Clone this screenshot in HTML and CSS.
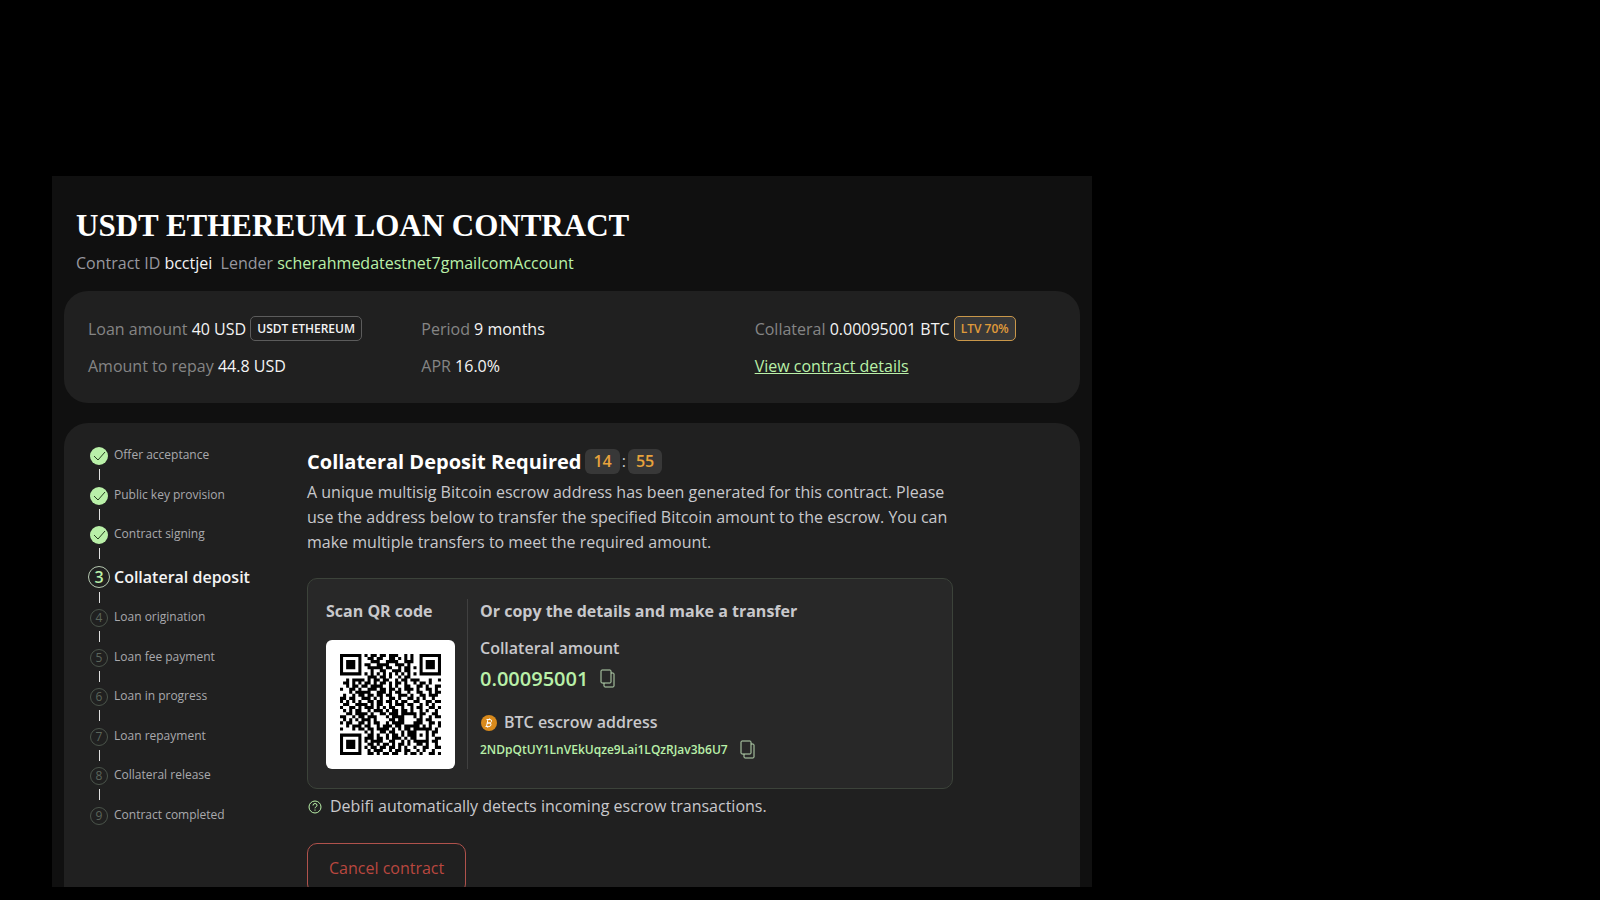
FILE: index.html
```html
<!DOCTYPE html>
<html lang="en">
  <head>
    <meta charset="UTF-8" />
    <meta name="viewport" content="width=device-width, initial-scale=1.0" />
    <title>Loan contract</title>
    <link rel="stylesheet" href="styles.css">
  </head>
  <body>
    <main class="frame">
      <header class="page-head">
        <h1>USDT ETHEREUM LOAN CONTRACT</h1>
        <p>
          Contract ID <span class="white">bcctjei</span>&nbsp; Lender
          <span class="green">scherahmedatestnet7gmailcomAccount</span>
        </p>
      </header>

      <section class="card summary">
        <p>Loan amount <span class="white">40 USD</span> <span class="tag">USDT ETHEREUM</span></p>
        <p>Period <span class="white">9 months</span></p>
        <p>Collateral <span class="white">0.00095001 BTC</span> <span class="tag tag-ltv">LTV 70%</span></p>
        <p>Amount to repay <span class="white">44.8 USD</span></p>
        <p>APR <span class="white">16.0%</span></p>
        <p><a href="#" class="green">View contract details</a></p>
      </section>

      <section class="card contract">
        <ol class="steps">
          <li class="done"><span class="mark"><svg viewBox="0 0 18 18"><path d="M4 9l4 4 7-8" /></svg></span>Offer acceptance</li>
          <li class="done"><span class="mark"><svg viewBox="0 0 18 18"><path d="M4 9l4 4 7-8" /></svg></span>Public key provision</li>
          <li class="done"><span class="mark"><svg viewBox="0 0 18 18"><path d="M4 9l4 4 7-8" /></svg></span>Contract signing</li>
          <li class="active"><span class="mark">3</span>Collateral deposit</li>
          <li><span class="mark">4</span>Loan origination</li>
          <li><span class="mark">5</span>Loan fee payment</li>
          <li><span class="mark">6</span>Loan in progress</li>
          <li><span class="mark">7</span>Loan repayment</li>
          <li><span class="mark">8</span>Collateral release</li>
          <li><span class="mark">9</span>Contract completed</li>
        </ol>

        <div class="deposit">
          <div class="deposit-head">
            <h2>Collateral Deposit Required</h2>
            <div class="timer"><span>14</span>:<span>55</span></div>
          </div>
          <p class="intro">
            A unique multisig Bitcoin escrow address has been generated for this contract. Please
            use the address below to transfer the specified Bitcoin amount to the escrow. You can
            make multiple transfers to meet the required amount.
          </p>

          <div class="transfer">
            <div class="scan">
              <h3>Scan QR code</h3>
              <div class="qr"><svg class="qr-code" viewBox="0 0 33 33"><path /></svg></div>
            </div>
            <div class="details">
              <h3>Or copy the details and make a transfer</h3>
              <h4>Collateral amount</h4>
              <div class="copy-row amount">
                <span>0.00095001</span>
                <button class="copy" aria-label="Copy amount">
                  <svg viewBox="0 0 15 19"><rect x="1" y="1" width="10" height="13" rx="1" /><path d="M11 4h2q1 0 1 1v12q0 1-1 1H5q-1 0-1-1v-3" /></svg>
                </button>
              </div>
              <h4 class="btc">
                <svg viewBox="0 0 18 18">
                  <circle cx="9" cy="9" r="8" />
                  <path d="M8 5L6.500 12.500M6.500 5.500h3.500q2 .2 1.500 2t-2.500 1.500h-2h2.300q2.200.2 1.700 2t-2.500 1.500H5.500M9.500 4.500v1M8 12.500l-.3 1.200" />
                </svg>
                BTC escrow address
              </h4>
              <div class="copy-row address">
                <span>2NDpQtUY1LnVEkUqze9Lai1LQzRJav3b6U7</span>
                <button class="copy" aria-label="Copy address">
                  <svg viewBox="0 0 15 19"><rect x="1" y="1" width="10" height="13" rx="1" /><path d="M11 4h2q1 0 1 1v12q0 1-1 1H5q-1 0-1-1v-3" /></svg>
                </button>
              </div>
            </div>
          </div>

          <p class="note">
            <svg viewBox="0 0 14 14"><circle cx="7" cy="7" r="6" /><path d="M5 5.500q0-2 2-2t2 1.800q0 1-1 1.500t-1 1.500M7 9.500v1.200" /></svg>
            Debifi automatically detects incoming escrow transactions.
          </p>
          <button class="cancel">Cancel contract</button>
        </div>
      </section>
    </main>
    <script src="qr.js"></script>
  </body>
</html>
```
FILE: styles.css
```css
* {
  box-sizing: border-box;
}
body {
  margin: 0;
  height: 100vh;
  padding: 176px 0 13px 52px;
  background-color: #000;
  color: #c8c8cc;
  font-family: "Open Sans", "Noto Sans", sans-serif;
  font-size: 16px;
  line-height: 25px;
}
h1,
h2,
h3,
h4,
p,
ol {
  margin: 0;
  padding: 0;
}
svg {
  display: block;
  fill: none;
}
.frame {
  width: 65vw;
  height: 100%;
  padding: 30px 12px 0;
  overflow: hidden;
  background-color: #101010;
}
.page-head {
  padding: 0 12px;
  margin-bottom: 15px;
  color: #97979f;
}
h1 {
  color: #fff;
  font-family: "Liberation Serif", serif;
  font-size: 31px;
  line-height: 40px;
  margin-bottom: 5px;
}
.white {
  color: #f4f4f4;
}
.green {
  color: #b9f0a8;
}
.card {
  background-color: #202020;
  border-radius: 24px;
}
.summary {
  display: grid;
  grid-template-columns: repeat(3, 1fr);
  align-items: end;
  gap: 12px 32px;
  padding: 25px 24px 24px;
  margin-bottom: 20px;
  color: #858585;
}
.tag {
  display: inline-block;
  padding: 0 6px;
  border: 1px solid #5c5c5c;
  border-radius: 5px;
  color: #f4f4f4;
  font-size: 12px;
  font-weight: 600;
  line-height: 23px;
  vertical-align: 2px;
}
.tag-ltv {
  border-color: #c9974a;
  background-color: #383838;
  color: #e09b3a;
}
.contract {
  display: flex;
  padding: 24px 24px 40px;
}
.steps {
  display: flex;
  flex-direction: column;
  justify-content: space-between;
  width: 219px;
  height: 378px;
  list-style: none;
  color: #a9a9ad;
  font-size: 12px;
  line-height: 16px;
}
.steps li {
  display: grid;
  grid-template-columns: 22px 1fr;
  column-gap: 4px;
}
.steps li:not(:last-child)::after {
  content: "";
  grid-column: 1;
  justify-self: center;
  width: 1px;
  height: 11px;
  margin: 4px 0 3px;
  background-color: #e0e0e0;
}
.mark {
  display: flex;
  align-items: center;
  justify-content: center;
  justify-self: center;
  width: 18px;
  height: 18px;
  border: 1px solid #4a544a;
  border-radius: 50%;
  color: #5c665c;
}
.done .mark {
  border: none;
  background-color: #b9f0a8;
}
.done svg {
  width: 18px;
  stroke: #26401f;
}
.steps .active {
  align-items: center;
  color: #f4f4f4;
  font-size: 16px;
  font-weight: 600;
}
.active .mark {
  width: 22px;
  height: 22px;
  border-color: #b5c8b0;
  color: #b9f0a8;
}
.deposit {
  flex: 1;
  max-width: 646px;
  padding-top: 2px;
}
.deposit-head {
  display: flex;
  align-items: center;
  gap: 4px;
  margin-bottom: 6px;
}
h2 {
  color: #fff;
  font-size: 20px;
}
.timer {
  display: flex;
  gap: 2px;
}
.timer span {
  padding: 0 8px;
  border-radius: 6px;
  background-color: #383838;
  color: #e8a33c;
  font-weight: 600;
}
.transfer {
  display: flex;
  margin: 23px 0 5px;
  padding: 20px 18px 19px;
  border: 1px solid #3c433a;
  border-radius: 10px;
  background-color: #282828;
}
h3,
h4 {
  font-size: 16px;
}
h4 {
  font-weight: 600;
}
.scan {
  padding-right: 12px;
  border-right: 1px solid #404040;
}
.scan h3 {
  margin-bottom: 16px;
}
.qr {
  width: 129px;
  padding: 14px;
  border-radius: 6px;
  background-color: #fff;
}
.qr-code path {
  fill: #000;
}
.details {
  padding-left: 12px;
}
.details h3 {
  margin-bottom: 12px;
}
.copy-row {
  display: flex;
  align-items: center;
  gap: 12px;
  color: #b9f0a8;
  font-weight: 600;
}
.amount {
  margin: 5px 0 19px;
  font-size: 20px;
}
.address {
  margin-top: 2px;
  font-size: 12px;
}
.copy {
  padding: 0;
  border: none;
  background: none;
}
.copy svg {
  width: 15px;
  stroke: #b9d8b0;
}
.btc {
  display: flex;
  align-items: center;
  gap: 6px;
}
.btc svg {
  width: 18px;
  stroke: #fff;
}
.btc circle {
  fill: #d98a1c;
  stroke: none;
}
.note {
  display: flex;
  align-items: center;
  gap: 8px;
  padding-left: 1px;
}
.note svg {
  width: 14px;
  stroke: #b9f0a8;
}
.cancel {
  margin-top: 24px;
  padding: 12px 21px;
  border: 1px solid #b0524c;
  border-radius: 10px;
  background: none;
  color: #b9473f;
  font: inherit;
}
```
FILE: qr.js
```js
// placeholder pattern, it does not encode the address and will not scan
const rows = [
  "#######.#.##.##.###..#.#..#######",
  "#.....#..##.##..##.#.#.#..#.....#",
  "#.###.#...###..####..###..#.###.#",
  "#.###.#.##..####..###.#...#.###.#",
  "#.###.#..#####.##..#.##.#.#.###.#",
  "#.....#...#..##..###.##...#.....#",
  "#######.#.#.#.#.#.#.#.#.#.#######",
  ".........###.##.#..#.##..........",
  "..#.####.#.##.##..#.##.###...#..#",
  ".##.#.#.##.#.##.#.##.#..#.##.#...",
  "..#.##.##.####..#.#..##..##.#..##",
  "#..##.#..###.##.##.#.###.#..##.#.",
  "...#.#####..###.#.##..#..##..#.##",
  ".#..#.##.##.##.##..###.#..##.###.",
  "##.##..###.#.#..##.#..##.#.#..#..",
  "#.#.#.#..##.##.##.#.##..##..##.##",
  ".##..####.#.##..#.###.##..#.#.#..",
  "#..##.#.###.#.#.##..#..#.##..##.#",
  ".#.#.##..#.###.#.##.##.#..#.#..#.",
  "..##.####.#..##.###.#####.##..##.",
  "##..#.##.###...#.####...#.#..#.##",
  ".#.#.#.###.#....##.##....##.##...",
  "#.##..##.#.##..#.####...###..##.#",
  "..#.###.##..#.###.##.#####.#.#..#",
  "#...#.##.##.####.#.#.##.######.#.",
  "........#.#..##.##..#.###...#.##.",
  "#######..##.#..#.##.#.###.#.#.#..",
  "#.....#.###.##.#.###.#.##...#..##",
  "#.###.#.#.####..##..#.#.#####.##.",
  "#.###.#..##.#.##.#.##.#..##.#..#.",
  "#.###.#.#.##.##.##.#.#..#..##..##",
  "#.....#..#.###..#.##.##..#.#..#..",
  "#######..##.#.##.##..#.##.#..##.#",
];

let d = "";
rows.forEach((row, y) => {
  [...row].forEach((cell, x) => {
    if (cell === "#") d += `M${x} ${y}h1v1h-1z`;
  });
});
document.querySelector(".qr-code path").setAttribute("d", d);
```
